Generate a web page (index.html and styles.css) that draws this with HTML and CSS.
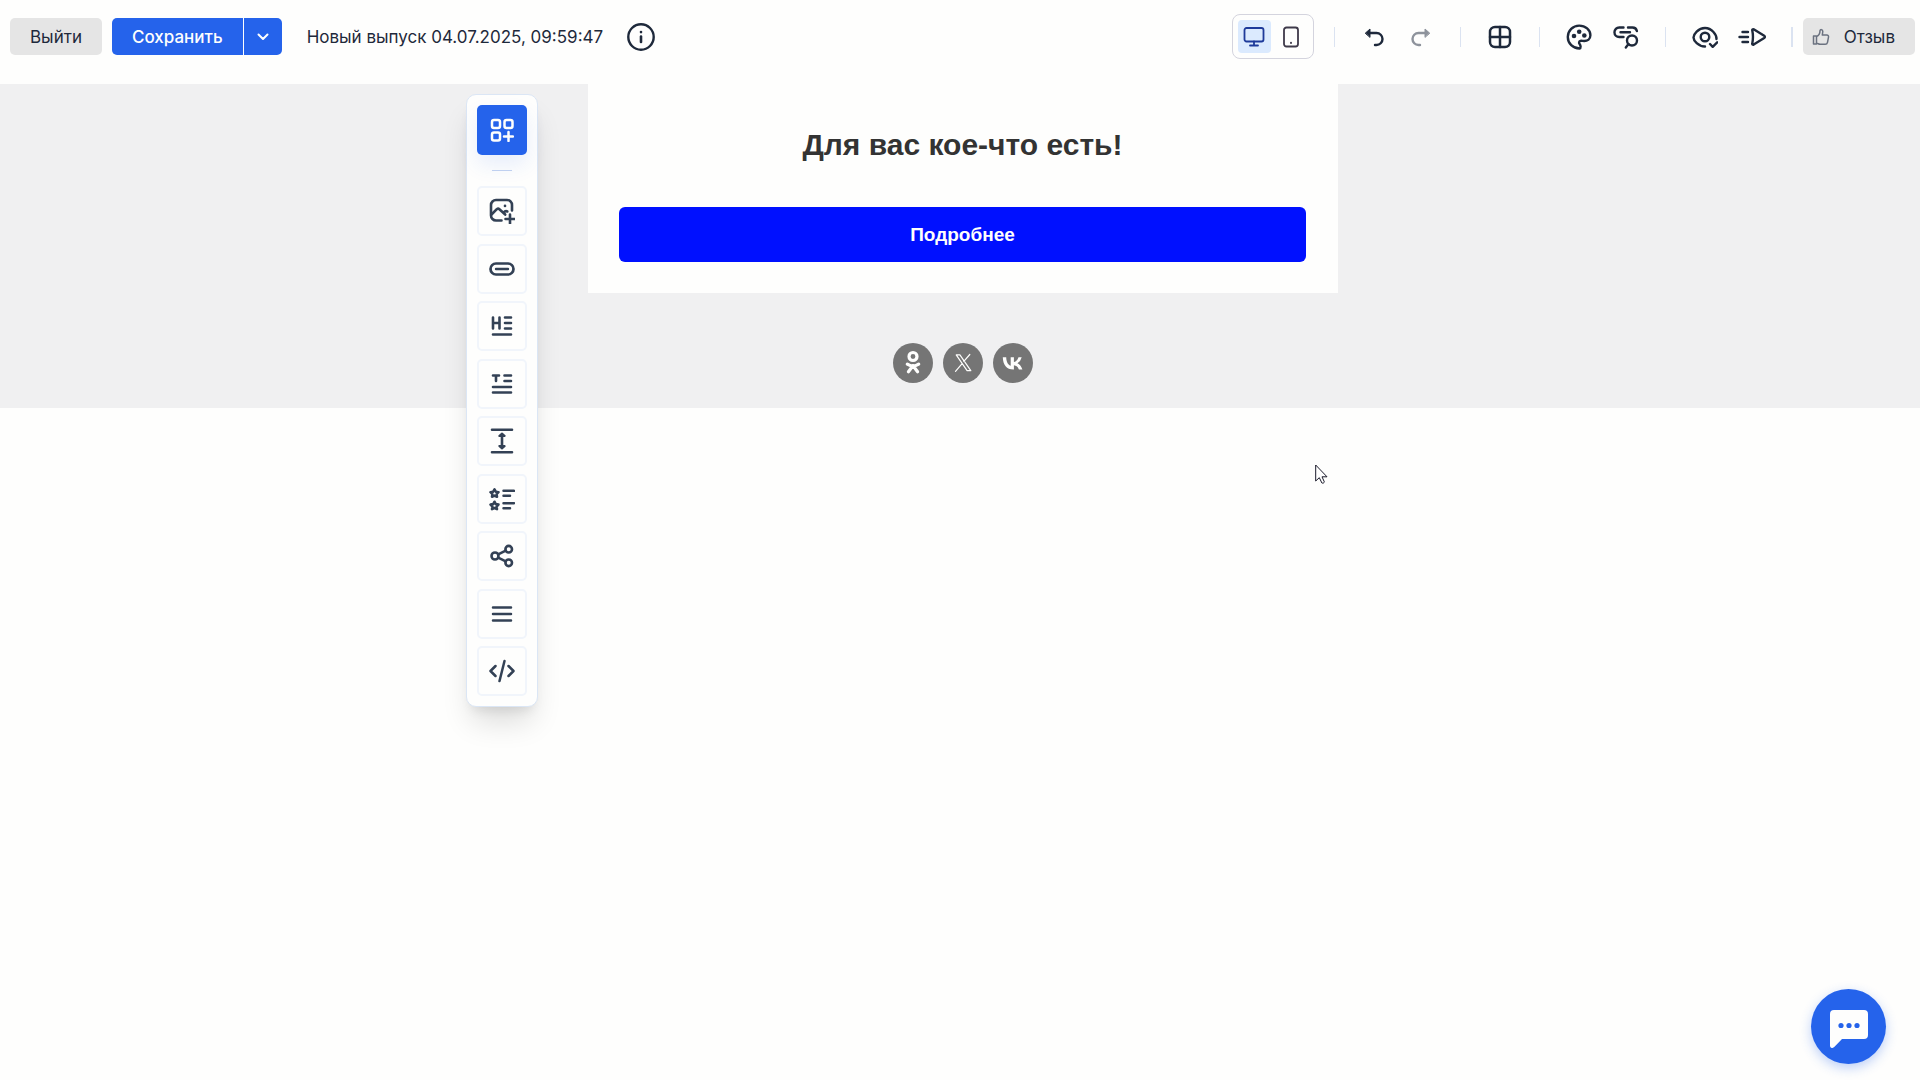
FILE: index.html
```html
<!DOCTYPE html>
<html lang="ru">
<head>
  <meta charset="utf-8">
  <meta name="viewport" content="width=device-width, initial-scale=1">
  <title>Редактор выпуска</title>
  <link rel="stylesheet" href="styles.css">
</head>
<body>
  <header class="topbar">
    <button class="btn btn-muted" type="button">Выйти</button>
    <div class="split">
      <button class="btn btn-primary split-main" type="button">Сохранить</button>
      <button class="btn btn-primary split-more" type="button" aria-label="Другие варианты сохранения">
        <svg class="icon" width="12" height="8" viewBox="0 0 12 8" stroke-width="2"><path d="M1.5 1.5 6 6l4.500-4.500"/></svg>
      </button>
    </div>
    <span class="issue-name">Новый выпуск 04.07.2025, 09:59:47</span>
    <button class="info" type="button" aria-label="Информация">
      <svg class="icon" width="28" height="28" viewBox="0 0 28 28" stroke-width="2.400"><circle cx="14" cy="14" r="12.700"/><path d="M14 13.500v5.500" stroke-width="2.600"/><path d="M14 9v.1" stroke-width="2.600"/></svg>
    </button>

    <div class="actions">
      <div class="devices">
        <button class="device device-on" type="button" aria-label="Компьютер" aria-pressed="true">
          <svg class="icon" width="22" height="20" viewBox="0 0 22 20" stroke-width="1.800"><rect x="1.500" y="1" width="19" height="13.500" rx="2"/><path d="M11 14.500V18M7 18.500h8"/></svg>
        </button>
        <button class="device" type="button" aria-label="Телефон" aria-pressed="false">
          <svg class="icon" width="16" height="22" viewBox="0 0 16 22" stroke-width="1.800"><rect x="1" y="1.500" width="14" height="19" rx="2.500"/><path d="M8 16.800v.1" stroke-width="2"/></svg>
        </button>
      </div>
      <span class="rule rule-first"></span>
      <button class="tool" type="button" aria-label="Отменить">
        <svg class="icon" width="20" height="20" viewBox="0 0 20 20" stroke-width="2.400"><path d="M5 6h7.500a6 6 0 0 1 0 12H11"/><path d="M1.500 6 6 2v8z" fill="currentColor" stroke-width="1"/></svg>
      </button>
      <button class="tool" type="button" aria-label="Повторить" disabled>
        <svg class="icon" width="20" height="20" viewBox="0 0 20 20" stroke-width="2.400"><path d="M15 6H7.500a6 6 0 0 0 0 12H9"/><path d="M18.500 6 14 2v8z" fill="currentColor" stroke-width="1"/></svg>
      </button>
      <span class="rule"></span>
      <button class="tool" type="button" aria-label="Сетка">
        <svg class="icon" width="24" height="24" viewBox="0 0 24 24" stroke-width="2.500"><rect x="2" y="2" width="20" height="20" rx="5"/><path d="M12 2v20M2 12h20"/></svg>
      </button>
      <span class="rule"></span>
      <button class="tool" type="button" aria-label="Оформление">
        <svg class="icon" width="26" height="26" viewBox="0 0 26 26" stroke-width="2.400"><path d="M13.500 24.500C7 24.500 1.800 19.500 1.800 13S7 1.600 13.200 1.600c6.200 0 11.200 4.400 11.200 9.700 0 3.600-2.900 5.700-6.200 5.700-1.500 0-2.600-.4-3.800-.1-1.500.4-1.700 1.900-.8 3 1.100 1.400 1.600 4.100-.1 4.600z"/><g fill="currentColor" stroke="none"><circle cx="8" cy="12" r="2.300"/><circle cx="13.200" cy="7.700" r="2.300"/><circle cx="18.300" cy="11.500" r="2.300"/></g></svg>
      </button>
      <button class="tool" type="button" aria-label="Проверка ссылок">
        <svg class="icon" width="26" height="26" viewBox="0 0 26 26" stroke-width="2.400"><path d="M10.500 3.500H6.200a4.500 4.500 0 0 0 0 9.500h4.300M15 3.500h4.500c2.200 0 3.900 1.400 4.400 3.500M7.500 8.300H17"/><circle cx="19" cy="16.500" r="5"/><path d="m15.500 20-2.700 3.500"/></svg>
      </button>
      <span class="rule"></span>
      <button class="tool" type="button" aria-label="Предпросмотр">
        <svg class="icon" width="26" height="26" viewBox="0 0 26 26" stroke-width="2.400"><path d="M24.500 15c.3-4-4.600-11-11.500-11S1.500 10.500 1.500 13.500 6.200 22.500 13 22.500"/><circle cx="13" cy="13" r="4.300"/><path d="m18 20 2.700 2.800 4.500-4.500"/></svg>
      </button>
      <button class="tool" type="button" aria-label="Отправить тест">
        <svg class="icon" width="28" height="24" viewBox="0 0 28 24" stroke-width="2.400"><path d="M4.500 7H10M1.500 12H10M4.500 17H10"/><path d="M14.300 5.500c-.3-1 .5-1.600 1.400-1.200l10.500 6.500c.9.600.9 1.600 0 2.200l-10.500 6.600c-.9.400-1.700-.2-1.400-1.200.9-4.400.9-8.400 0-12.900z"/></svg>
      </button>
      <span class="rule rule-last"></span>
      <button class="btn btn-muted feedback" type="button">
        <svg class="icon" width="18" height="18" viewBox="0 0 18 18" stroke-width="1.500"><path d="M1.500 8h3v8h-3zM4.500 8.500C7 7.500 8 5.500 8 2.700c0-1.500 2.800-1.600 2.800.8L10.300 7h4.400c1.500 0 2 .9 1.800 2.100l-1 5.200c-.3 1.400-1 1.900-2.300 1.900H8c-1.500 0-2-.9-3.500-.9"/></svg>
        Отзыв
      </button>
    </div>
  </header>

  <main class="stage">
    <div class="canvas">
      <section class="letter">
        <h1 class="letter-title">Для вас кое-что есть!</h1>
        <a class="letter-button" href="#">Подробнее</a>
      </section>
      <nav class="socials" aria-label="Социальные сети">
        <a class="social" href="#" aria-label="Одноклассники">
          <svg class="icon" width="40" height="40" viewBox="0 0 40 40" stroke-width="3.200"><circle cx="20" cy="13.500" r="4"/><path d="M14.300 21.200c3.600 2.300 7.800 2.300 11.400 0M20 22.800l-4.600 6M20 22.800l4.600 6"/></svg>
        </a>
        <a class="social" href="#" aria-label="X">
          <svg class="icon" width="40" height="40" viewBox="0 0 40 40" stroke-width="1.200" stroke-linejoin="miter"><path d="M13.200 11.900h3.700l10.900 15.800h-3.700zM26.800 11.500l-6 6.900M18.900 20.800l-6.400 7.500"/></svg>
        </a>
        <a class="social" href="#" aria-label="ВКонтакте">
          <svg width="40" height="40" viewBox="0 0 40 40" fill="currentColor"><path d="M20.400 26.500C13.700 26.500 10 21.900 9.800 14.200h3.400c.1 5.600 2.600 8 4.500 8.500v-8.500h3.200V19c1.900-.2 3.900-2.400 4.600-4.800h3.200a9.300 9.300 0 0 1-4.300 6c1.600.8 4 2.700 5 6.300h-3.500a6 6 0 0 0-5-4.300v4.300z"/></svg>
        </a>
      </nav>
    </div>

    <aside class="palette" aria-label="Блоки">
      <button class="block block-add" type="button" aria-label="Добавить блок">
        <svg class="icon" width="24" height="24" viewBox="0 0 24 24" stroke-width="2.500"><rect x="2" y="2" width="8" height="8" rx="2"/><rect x="14.500" y="2" width="8" height="8" rx="2"/><rect x="2" y="14.500" width="8" height="8" rx="2"/><path d="M18.500 14v9M14 18.500h9"/></svg>
      </button>
      <span class="palette-rule"></span>
      <div class="blocks">
        <button class="block" type="button" aria-label="Изображение">
          <svg class="icon" width="26" height="26" viewBox="0 0 26 26" stroke-width="2.600"><path d="M12.500 22.500H7a5 5 0 0 1-5-5V7a5 5 0 0 1 5-5h11a5 5 0 0 1 5 5v5.500"/><path d="m2.500 16.500 5.300-5.300c1-.8 1.700-.8 2.600 0l5.800 5.300M14.500 14.800c1.200-1.500 2-2.300 3.800-1.300"/><path d="M16 7.800v.1"/><path d="M21 16.500v9M16.500 21h9"/></svg>
        </button>
        <button class="block" type="button" aria-label="Кнопка">
          <svg class="icon" width="26" height="26" viewBox="0 0 26 26" stroke-width="2.700"><rect x="1.500" y="7.500" width="23" height="11" rx="5.500"/><path d="M7 13h12" stroke-width="2.400"/></svg>
        </button>
        <button class="block" type="button" aria-label="Заголовок">
          <svg class="icon" width="24" height="24" viewBox="0 0 24 24" stroke-width="2.600"><path d="M3 3.500v11M9.500 3.500v11M3 9h6.500M15 3.500h6M15 9h6M15 14.500h6M3 20.500h18"/></svg>
        </button>
        <button class="block" type="button" aria-label="Текст">
          <svg class="icon" width="24" height="24" viewBox="0 0 24 24" stroke-width="2.600"><path d="M3 3.500h6M6 3.500V9M14.500 3.500H21M14.500 9H21M3 15h18M3 20.500h18"/></svg>
        </button>
        <button class="block" type="button" aria-label="Отступ">
          <svg class="icon" width="26" height="26" viewBox="0 0 26 26" stroke-width="2.600"><path d="M3 1.800h20M3 24.200h20M13 7v12"/><path d="m10.200 8 2.800-2.600L15.800 8zM10.200 18l2.800 2.600 2.800-2.600z" fill="currentColor" stroke-width="1.800"/></svg>
        </button>
        <button class="block" type="button" aria-label="Список">
          <svg class="icon" width="26" height="26" viewBox="0 0 26 26" stroke-width="2.500"><path d="M14.500 4.800H25M14.500 9.800h6.500M14.500 17.200H25M14.500 22.200h6.500"/><path id="star" d="m5.500 3.300 1.300 2.400 2.700.5-1.900 1.900.4 2.700-2.500-1.200L3 10.800l.4-2.700-1.900-1.900 2.700-.5z"/><use href="#star" y="12.400"/></svg>
        </button>
        <button class="block" type="button" aria-label="Социальные сети">
          <svg class="icon" width="24" height="24" viewBox="0 0 24 24" stroke-width="2.600"><circle cx="5" cy="12" r="3.500"/><circle cx="18.700" cy="5.200" r="3.300"/><circle cx="18.700" cy="18.800" r="3.300"/><path d="m8.200 10.400 7.500-3.700M8.200 13.600l7.500 3.700"/></svg>
        </button>
        <button class="block" type="button" aria-label="Меню">
          <svg class="icon" width="24" height="24" viewBox="0 0 24 24" stroke-width="2.500"><path d="M3 5.500h18M3 12h18M3 18.500h18"/></svg>
        </button>
        <button class="block" type="button" aria-label="HTML-код">
          <svg class="icon" width="26" height="26" viewBox="0 0 26 26" stroke-width="2.500"><path d="m6.500 8-5 5 5 5M19.500 8l5 5-5 5M15.500 3l-5 20"/></svg>
        </button>
      </div>
    </aside>

    <svg class="pointer" width="14" height="21" viewBox="0 0 14 21" aria-hidden="true"><path d="M.7 1v16l3.600-3.300 2.600 5.300c1 .5 2.500-.2 2.400-1.200l-2.300-5H12z" fill="#fff" stroke="#1b1b2b" stroke-width="1"/></svg>
  </main>

  <button class="chat" type="button" aria-label="Чат поддержки">
    <svg width="38" height="38" viewBox="0 0 38 38"><path d="M4 0h30a4 4 0 0 1 4 4v21a4 4 0 0 1-4 4H12l-7.500 7.800C2.500 39 0 38 0 35.500V4a4 4 0 0 1 4-4z" fill="#fefefd"/><g fill="#2563eb"><circle cx="11" cy="15.500" r="2.600"/><circle cx="19" cy="15.500" r="2.600"/><circle cx="27" cy="15.500" r="2.600"/></g></svg>
  </button>
</body>
</html>
```

FILE: styles.css
```css
* {
  box-sizing: border-box;
}

body {
  margin: 0;
  min-height: 100vh;
  display: flex;
  flex-direction: column;
  background: #fefefd;
  color: #1e293b;
  font-family: Inter, "Liberation Sans", sans-serif;
  font-size: 17px;
  line-height: 24px;
}

button {
  margin: 0;
  padding: 0;
  border: 0;
  background: none;
  color: inherit;
  font: inherit;
}

svg {
  display: block;
}

.icon {
  fill: none;
  stroke: currentColor;
  stroke-linecap: round;
  stroke-linejoin: round;
}

/* Top bar */

.topbar {
  display: flex;
  align-items: center;
  padding: 14px 5px 25px 10px;
}

.btn {
  display: flex;
  align-items: center;
  justify-content: center;
  height: 37px;
  border-radius: 5px;
}

.btn-muted {
  padding: 0 20px;
  background: #e5e5e5;
}

.btn-primary {
  background: #2563eb;
  color: #fefefd;
  font-weight: 500;
}

.split {
  display: flex;
  gap: 1px;
  margin: 0 25px 0 10px;
}

.split-main {
  padding: 0 20px;
  border-radius: 5px 0 0 5px;
}

.split-more {
  width: 38px;
  border-radius: 0 5px 5px 0;
}

.issue-name {
  white-space: nowrap;
}

.info {
  margin-left: 24px;
}

.actions {
  display: flex;
  align-items: center;
  margin-left: auto;
}

.devices {
  display: flex;
  gap: 4px;
  padding: 5px;
  border: 1px solid #d4d4de;
  border-radius: 8px;
}

.device {
  display: grid;
  place-items: center;
  width: 33px;
  height: 33px;
  border-radius: 4px;
  color: #3f3a4a;
}

.device-on {
  background: #dbeafe;
  color: #1e3a9a;
}

.rule {
  width: 1px;
  height: 20px;
  margin: 0 16px 0 15px;
  background: #dbe3f1;
}

.rule-first {
  margin-left: 20px;
}

.rule-last {
  width: 2px;
  margin-right: 10px;
}

.tool {
  display: grid;
  place-items: center;
  width: 47px;
  height: 40px;
}

.tool:disabled {
  color: #8e939c;
}

.feedback {
  gap: 14px;
  padding-left: 9px;
}

.feedback .icon {
  color: #6b7280;
}

/* Letter */

.stage {
  position: relative;
  flex: 1;
}

.canvas {
  display: flex;
  flex-direction: column;
  align-items: center;
  padding: 0 0 25px 6px;
  background: #f0f0f1;
  font-family: "Liberation Sans", Arial, sans-serif;
}

.letter {
  width: 100%;
  max-width: 750px;
  padding: 43px 32px 31px 31px;
  background: #fefefd;
  text-align: center;
}

.letter-title {
  margin: 0 0 44px;
  color: #333;
  font-size: 30px;
  line-height: 36px;
}

.letter-button {
  display: block;
  padding: 15px;
  border-radius: 6px;
  background: #0010ff;
  color: #fefefd;
  font-size: 19px;
  font-weight: 700;
  line-height: 25px;
  text-decoration: none;
}

.socials {
  display: flex;
  gap: 10px;
  margin-top: 50px;
}

.social {
  border-radius: 50%;
  background: #757575;
  color: #fefefd;
}

/* Floating block palette */

.palette {
  position: absolute;
  top: 10px;
  left: calc(50% - 494px);
  display: flex;
  flex-direction: column;
  align-items: center;
  padding: 10px;
  border: 1px solid #dbe6f5;
  border-radius: 10px;
  background: #fefefd;
  box-shadow: 0 20px 30px -6px rgba(0, 0, 0, 0.14), 0 8px 12px -6px rgba(0, 0, 0, 0.1);
}

.palette-rule {
  width: 20px;
  height: 1px;
  margin: 15px 0;
  background: #bfd0f0;
}

.blocks {
  display: flex;
  flex-direction: column;
  justify-content: space-between;
  height: 510px;
}

.block {
  display: grid;
  place-items: center;
  width: 50px;
  height: 50px;
  border: 2px solid #f1f5fb;
  border-radius: 5px;
  color: #334155;
}

.block-add {
  border: 0;
  background: #2563eb;
  color: #fefefd;
  box-shadow: 0 10px 20px rgba(37, 99, 235, 0.1);
}

.pointer {
  position: absolute;
  top: 380px;
  left: calc(50% + 355px);
}

.chat {
  position: fixed;
  right: 34px;
  bottom: 16px;
  display: grid;
  place-items: center;
  width: 75px;
  height: 75px;
  padding-top: 4px;
  border-radius: 50%;
  background: #2563eb;
  box-shadow: 0 4px 12px rgba(37, 99, 235, 0.3);
}
```
